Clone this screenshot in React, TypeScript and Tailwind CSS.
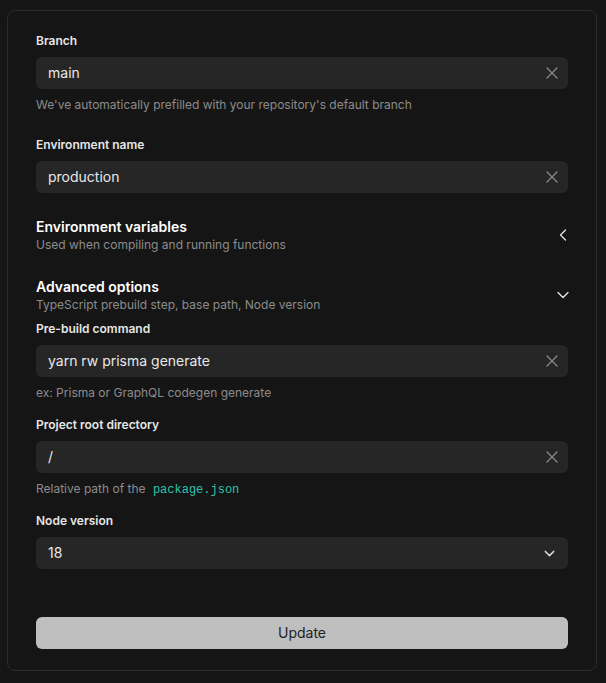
import { X, ChevronLeft, ChevronDown } from "lucide-react";

function Field({
  label,
  value,
  help,
  select,
}: {
  label: string;
  value: string;
  help?: React.ReactNode;
  select?: boolean;
}) {
  return (
    <div className="flex flex-col">
      <label className="text-xs leading-4 font-semibold text-[#e6e6e6]">{label}</label>
      <div
        className={`mt-2 h-8 rounded-md bg-[#262626] flex items-center pl-3 ${
          select ? "pr-2.5" : "pr-1.5"
        }`}
      >
        <span className="flex-1 text-sm text-[#e8e8e8]">{value}</span>
        {select ? (
          <ChevronDown size={17} strokeWidth={2} className="text-[#d4d4d4]" />
        ) : (
          <X size={20} strokeWidth={1.5} className="text-[#8a8a8a]" />
        )}
      </div>
      {help && <p className="mt-2 h-4 text-xs leading-4 text-[#8c8c8c]">{help}</p>}
    </div>
  );
}

function Section({ title, sub, open }: { title: string; sub: string; open?: boolean }) {
  return (
    <div className="flex items-center">
      <div className="flex-1">
        <h3 className="text-sm leading-5 font-semibold text-white">{title}</h3>
        <p className="text-xs leading-4 text-[#8c8c8c]">{sub}</p>
      </div>
      {open ? (
        <ChevronDown size={20} strokeWidth={1.6} className="text-[#e5e5e5] -mr-[5px]" />
      ) : (
        <ChevronLeft size={20} strokeWidth={1.6} className="text-[#e5e5e5] -mr-[5px]" />
      )}
    </div>
  );
}

export default function App() {
  return (
    <div className="min-h-[683px] bg-[#151515] pt-[10px] pl-[7px] font-['Inter',sans-serif]">
      <div className="w-[590px] h-[661px] rounded-lg border border-[#2b2b2b] px-7 pt-[22px]">
        <div className="flex flex-col gap-6">
          <Field
            label="Branch"
            value="main"
            help="We've automatically prefilled with your repository's default branch"
          />
          <Field label="Environment name" value="production" />
          <Section title="Environment variables" sub="Used when compiling and running functions" />
          <div className="flex flex-col gap-2">
            <Section title="Advanced options" sub="TypeScript prebuild step, base path, Node version" open />
            <div className="flex flex-col gap-4">
              <Field
                label="Pre-build command"
                value="yarn rw prisma generate"
                help="ex: Prisma or GraphQL codegen generate"
              />
              <Field
                label="Project root directory"
                value="/"
                help={
                  <>
                    Relative path of the{" "}
                    <code className="font-['Liberation_Mono',monospace] leading-none text-[#2ec4a9] ml-1">
                      package.json
                    </code>
                  </>
                }
              />
              <Field label="Node version" value="18" select />
            </div>
          </div>
        </div>
        <button className="mt-12 w-full h-8 rounded-md bg-[#bfbfbf] text-sm text-[#222]">
          Update
        </button>
      </div>
    </div>
  );
}
